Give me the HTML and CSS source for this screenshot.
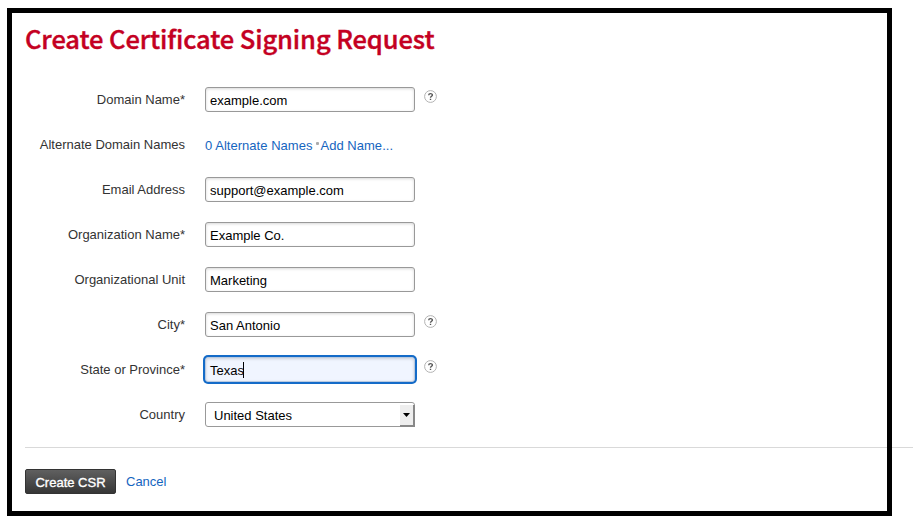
FILE: index.html
```html
<!DOCTYPE html>
<html lang="en">
<head>
<meta charset="utf-8">
<title>Create Certificate Signing Request</title>
<link rel="stylesheet" href="styles.css">
</head>
<body>
<div class="frame"></div>
<main class="page">
  <h1><span>Create Certificate Signing Request</span></h1>
  <form class="form">
    <div class="row"><div class="label"><span>Domain Name*</span></div><div class="field"><span>example.com</span></div>
      <svg class="help" viewBox="0 0 13 13"><circle cx="6.5" cy="6.5" r="5.9"/><path d="M4.7 5.2C4.7 3.1 8.4 3.1 8.4 5.1C8.4 6.3 6.5 6.3 6.5 7.8M6.5 8.7V10"/></svg></div>
    <div class="row"><div class="label"><span>Alternate Domain Names</span></div><div class="links"><a class="count">0 Alternate Names</a><i class="dot"></i><a class="add">Add Name...</a></div></div>
    <div class="row"><div class="label"><span>Email Address</span></div><div class="field"><span>support@example.com</span></div></div>
    <div class="row"><div class="label"><span>Organization Name*</span></div><div class="field"><span>Example Co.</span></div></div>
    <div class="row"><div class="label"><span>Organizational Unit</span></div><div class="field"><span>Marketing</span></div></div>
    <div class="row"><div class="label"><span>City*</span></div><div class="field"><span>San Antonio</span></div>
      <svg class="help" viewBox="0 0 13 13"><circle cx="6.5" cy="6.5" r="5.9"/><path d="M4.7 5.2C4.7 3.1 8.4 3.1 8.4 5.1C8.4 6.3 6.5 6.3 6.5 7.8M6.5 8.7V10"/></svg></div>
    <div class="row"><div class="label"><span>State or Province*</span></div><div class="field focused"><span>Texas</span><i class="caret"></i></div>
      <svg class="help" viewBox="0 0 13 13"><circle cx="6.5" cy="6.5" r="5.9"/><path d="M4.7 5.2C4.7 3.1 8.4 3.1 8.4 5.1C8.4 6.3 6.5 6.3 6.5 7.8M6.5 8.7V10"/></svg></div>
    <div class="row"><div class="label"><span>Country</span></div><div class="field select"><span>United States</span>
      <div class="arrow"><svg width="7" height="4" viewBox="0 0 7 4"><path d="M0 0H7L3.5 4Z"/></svg></div></div></div>
  </form>
  <div class="actions"><div class="button"><span>Create CSR</span></div><a class="cancel">Cancel</a></div>
</main>
</body>
</html>
```
FILE: styles.css
```css
* { box-sizing: border-box; }
body {
  margin: 0;
  height: 523px;
  overflow: hidden;
  background: #fff;
  color: #333;
  font: 13px/25px "Liberation Sans", Arial, sans-serif;
}
.frame {
  position: absolute;
  left: 7px;
  top: 8px;
  width: 885px;
  height: 508px;
  border: 5px solid #000;
}
.page { padding: 20px 0 0 25px; }
h1 {
  margin: 0;
  height: 67px;
  color: #c40022;
  font: 500 25.5px/36px "Noto Sans CJK SC", "Open Sans", sans-serif;
  letter-spacing: -.1px;
  -webkit-text-stroke: .4px #c40022;
  white-space: nowrap;
}
.form {
  display: flex;
  flex-direction: column;
  gap: 20px;
  height: 361px;
  border-bottom: 1px solid #d9d9d9;
}
.row { display: flex; height: 25px; }
.label {
  width: 160px;
  margin-right: 20px;
  text-align: right;
  white-space: nowrap;
}
.field {
  display: flex;
  width: 210px;
  height: 25px;
  padding-left: 4px;
  border: 1px solid #999;
  border-radius: 3px;
  background: #fff;
  box-shadow: inset 0 1px 3px rgba(0, 0, 0, .16);
  color: #000;
  line-height: 26px;
}
.focused {
  border-color: #b9c9df;
  background: #f0f5ff;
  box-shadow: 0 0 0 2px #146bc8, inset 0 1px 3px rgba(0, 0, 0, .16);
}
.caret { width: 1px; height: 16px; margin: 4px 0 0 -1px; background: #000; }
.select {
  justify-content: space-between;
  padding-left: 8px;
  box-shadow: none;
}
.arrow {
  display: flex;
  align-items: center;
  justify-content: center;
  width: 15px;
  height: 22px;
  margin: 2px -1px 0 0;
  border: solid #888;
  border-width: 0 2px 2px 0;
  background: #eee;
}
.arrow path { fill: #000; }
.help { width: 13px; height: 13px; margin: 3px 0 0 9px; }
.help circle { fill: #fff; stroke: #aaa; stroke-width: .9; }
.help path { fill: none; stroke: #555; stroke-width: 1.4; }
a { color: #1565c0; }
.links { display: flex; line-height: 27px; }
.count, .add { letter-spacing: .03px; }
.dot { width: 3px; height: 3px; margin: 10px 1px 0 4px; border-radius: 1px; background: #aaa; }
.actions { display: flex; padding-top: 21px; }
.button {
  width: 91px;
  height: 25px;
  margin-right: 10px;
  border: 1px solid #333;
  border-radius: 2px;
  background: linear-gradient(#606060, #363636);
  color: #fff;
  line-height: 25px;
  text-align: center;
  -webkit-text-stroke: .35px #fff;
}
```
